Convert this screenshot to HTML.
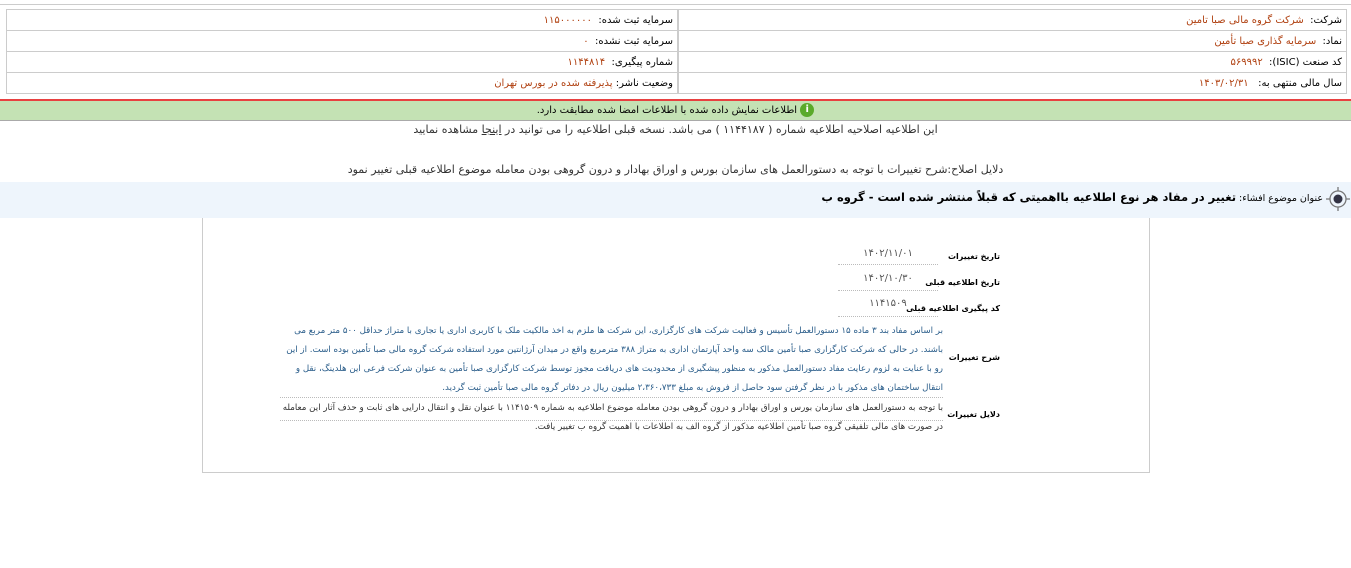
<!DOCTYPE html>
<html><head><meta charset="utf-8"><style>
body{margin:0;width:1351px;height:568px;background:#fff;font-family:"DejaVu Sans",sans-serif;font-size:10px;color:#000;position:relative;overflow:hidden}
.a{position:absolute;white-space:nowrap}
.r{direction:rtl}
table.t{position:absolute;border-collapse:collapse;top:9px}
table.t td{border:1px solid #ccc;height:20px;padding:0 4px;direction:rtl;text-align:right;font-size:10px}
.v{color:#b04010}
.vb{color:#2a5d8a}
.dot{border-bottom:1px dotted #bbb}
.lb{position:absolute;right:351px;direction:rtl;font-weight:bold;font-size:8px;white-space:nowrap}
</style></head><body>
<div class="a" style="left:0;top:4px;width:1351px;border-top:1px solid #ccc"></div>
<table class="t" style="left:6px;width:672px">
<tr><td>سرمایه ثبت شده: &nbsp;<span class="v">۱۱۵۰۰۰۰۰۰</span></td></tr>
<tr><td>سرمایه ثبت نشده: &nbsp;<span class="v">۰</span></td></tr>
<tr><td>شماره پیگیری: &nbsp;<span class="v">۱۱۴۴۸۱۴</span></td></tr>
<tr><td>وضعیت ناشر: <span class="v">پذیرفته شده در بورس تهران</span></td></tr>
</table>
<table class="t" style="left:678px;width:669px">
<tr><td>شرکت: &nbsp;<span class="v">شرکت گروه مالی صبا تامین</span></td></tr>
<tr><td>نماد: &nbsp;<span class="v">سرمایه گذاری صبا تأمین</span></td></tr>
<tr><td>کد صنعت (ISIC): &nbsp;<span class="v">۵۶۹۹۹۲</span></td></tr>
<tr><td>سال مالی منتهی به: &nbsp;&nbsp;<span class="v">۱۴۰۳/۰۲/۳۱</span></td></tr>
</table>
<div class="a" style="left:0;top:99px;width:1351px;height:2px;background:#e84040"></div>
<div class="a" style="left:0;top:101px;width:1351px;height:19px;background:#c4e2b4;border-bottom:1px solid #aaa"></div>
<div class="a r" style="left:0;top:103px;width:1351px;text-align:center;font-size:10px">
<span style="display:inline-block;width:14px;height:14px;border-radius:50%;background:#5aaa2a;color:#fff;font-weight:bold;text-align:center;line-height:14px;vertical-align:middle">i</span> اطلاعات نمایش داده شده با اطلاعات امضا شده مطابقت دارد.</div>
<div class="a r" style="left:0;top:123px;width:1351px;text-align:center;font-size:11px;color:#333">این اطلاعیه اصلاحیه اطلاعیه شماره ( ۱۱۴۴۱۸۷ ) می باشد. نسخه قبلی اطلاعیه را می توانید در <u>اینجا</u> مشاهده نمایید</div>
<div class="a r" style="left:0;top:163px;width:1351px;text-align:center;font-size:11px;color:#333">دلایل اصلاح:شرح تغییرات با توجه به دستورالعمل های سازمان بورس و اوراق بهادار و درون گروهی بودن معامله موضوع اطلاعیه قبلی تغییر نمود</div>
<div class="a" style="left:0;top:182px;width:1351px;height:36px;background:#eef5fc"></div>
<svg class="a" style="left:1325px;top:186px" width="26" height="26" viewBox="0 0 26 26"><circle cx="13" cy="13" r="8" fill="none" stroke="#777" stroke-width="1.3"/><circle cx="13" cy="13" r="4.5" fill="#334"/><path d="M13 1v4M13 21v4M1 13h4M21 13h4" stroke="#777" stroke-width="1.3"/></svg>
<div class="a r" style="right:28px;top:190px;font-size:9.5px">عنوان موضوع افشاء: <b style="font-size:11.5px">تغییر در مفاد هر نوع اطلاعیه بااهمیتی که قبلاً منتشر شده است - گروه ب</b></div>
<div class="a" style="left:202px;top:218px;width:946px;height:254px;border:1px solid #ccc;border-top:none"></div>
<div class="lb" style="top:252px">تاریخ تغییرات</div>
<div class="a dot" style="left:838px;top:248px;width:100px;height:16px;text-align:center;color:#555">۱۴۰۲/۱۱/۰۱</div>
<div class="lb" style="top:278px">تاریخ اطلاعیه قبلی</div>
<div class="a dot" style="left:838px;top:273px;width:100px;height:17px;text-align:center;color:#555">۱۴۰۲/۱۰/۳۰</div>
<div class="lb" style="top:304px">کد پیگیری اطلاعیه قبلی</div>
<div class="a dot" style="left:838px;top:298px;width:100px;height:18px;text-align:center;color:#555">۱۱۴۱۵۰۹</div>
<div class="lb" style="top:353px">شرح تغییرات</div>
<div class="a r" style="left:280px;top:322px;width:663px;white-space:normal;line-height:19px;font-size:8.7px;letter-spacing:-0.2px"><span class="vb">بر اساس مفاد بند ۳ ماده ۱۵ دستورالعمل تأسیس و فعالیت شرکت های کارگزاری، این شرکت ها ملزم به اخذ مالکیت ملک با کاربری اداری یا تجاری با متراژ حداقل ۵۰۰ متر مربع می باشند. در حالی که شرکت کارگزاری صبا تأمین مالک سه واحد آپارتمان اداری به متراژ ۳۸۸ مترمربع واقع در میدان آرژانتین مورد استفاده شرکت گروه مالی صبا تأمین بوده است. از این رو با عنایت به لزوم رعایت مفاد دستورالعمل مذکور به منظور پیشگیری از محدودیت های دریافت مجوز توسط شرکت کارگزاری صبا تأمین به عنوان شرکت فرعی این هلدینگ، نقل و انتقال ساختمان های مذکور با در نظر گرفتن سود حاصل از فروش به مبلغ ۲،۳۶۰،۷۳۳ میلیون ریال در دفاتر گروه مالی صبا تأمین ثبت گردید.</span></div>
<div class="lb" style="top:410px">دلایل تغییرات</div>
<div class="a r" style="left:280px;top:399px;width:663px;white-space:normal;line-height:19px;font-size:8.7px;letter-spacing:-0.2px;color:#333">با توجه به دستورالعمل های سازمان بورس و اوراق بهادار و درون گروهی بودن معامله موضوع اطلاعیه به شماره ۱۱۴۱۵۰۹ با عنوان نقل و انتقال دارایی های ثابت و حذف آثار این معامله در صورت های مالی تلفیقی گروه صبا تأمین اطلاعیه مذکور از گروه الف به اطلاعات با اهمیت گروه ب تغییر یافت.</div>
<div class="a dot" style="left:280px;top:419px;width:663px;height:1px"></div>
<div class="a dot" style="left:280px;top:396px;width:663px;height:1px"></div>
</body></html>
